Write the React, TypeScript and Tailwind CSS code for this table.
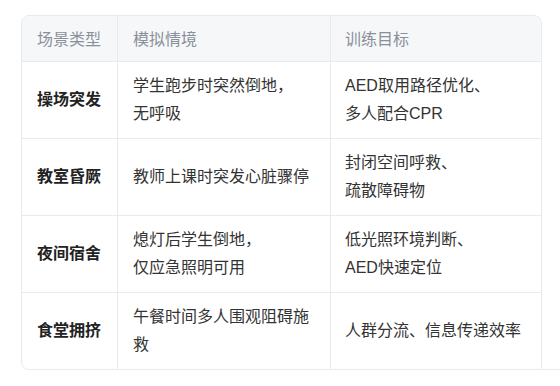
const rows: { name: string; scene: React.ReactNode; goal: React.ReactNode }[] = [
  {
    name: "操场突发",
    scene: (
      <>
        学生跑步时突然倒地，
        <br />
        无呼吸
      </>
    ),
    goal: (
      <>
        AED取用路径优化、
        <br />
        多人配合CPR
      </>
    ),
  },
  {
    name: "教室昏厥",
    scene: "教师上课时突发心脏骤停",
    goal: (
      <>
        封闭空间呼救、
        <br />
        疏散障碍物
      </>
    ),
  },
  {
    name: "夜间宿舍",
    scene: (
      <>
        熄灯后学生倒地，
        <br />
        仅应急照明可用
      </>
    ),
    goal: (
      <>
        低光照环境判断、
        <br />
        AED快速定位
      </>
    ),
  },
  {
    name: "食堂拥挤",
    scene: "午餐时间多人围观阻碍施救",
    goal: "人群分流、信息传递效率",
  },
];

export default function App() {
  return (
    <div
      className="w-[560px] h-[386px] bg-white pt-[15px] pl-[21px] flex items-start"
      style={{ fontFamily: '"Liberation Sans", "Noto Sans CJK SC", sans-serif' }}
    >
      <div className="w-[521px] border border-[#e8eaed] rounded-[8px] rounded-br-none overflow-hidden text-[16px] leading-[28px]">
        <div className="grid grid-cols-[96px_213px_210px] bg-[#f6f7f9] text-[#8a8f99] border-b border-[#e8eaed]">
          <div className="h-[45px] pl-[15px] pt-[10px] border-r border-[#e8eaed]">场景类型</div>
          <div className="h-[45px] pl-[15px] pt-[10px] border-r border-[#e8eaed]">模拟情境</div>
          <div className="h-[45px] pl-[14px] pt-[10px]">训练目标</div>
        </div>
        {rows.map((r, i) => (
          <div
            key={r.name}
            className={`grid grid-cols-[96px_213px_210px] text-[#333] ${i < rows.length - 1 ? "border-b border-[#e8eaed]" : ""}`}
          >
            <div className="h-[76px] pl-[15px] flex items-center font-bold text-[#222] border-r border-[#e8eaed]">
              {r.name}
            </div>
            <div className="h-[76px] pl-[15px] pr-[15px] flex items-center border-r border-[#e8eaed]">
              <div>{r.scene}</div>
            </div>
            <div className="h-[76px] pl-[14px] pr-[10px] flex items-center">
              <div>{r.goal}</div>
            </div>
          </div>
        ))}
      </div>
      <div className="self-start mt-[354px] w-[18px] h-px bg-[#e8eaed]" />
    </div>
  );
}
